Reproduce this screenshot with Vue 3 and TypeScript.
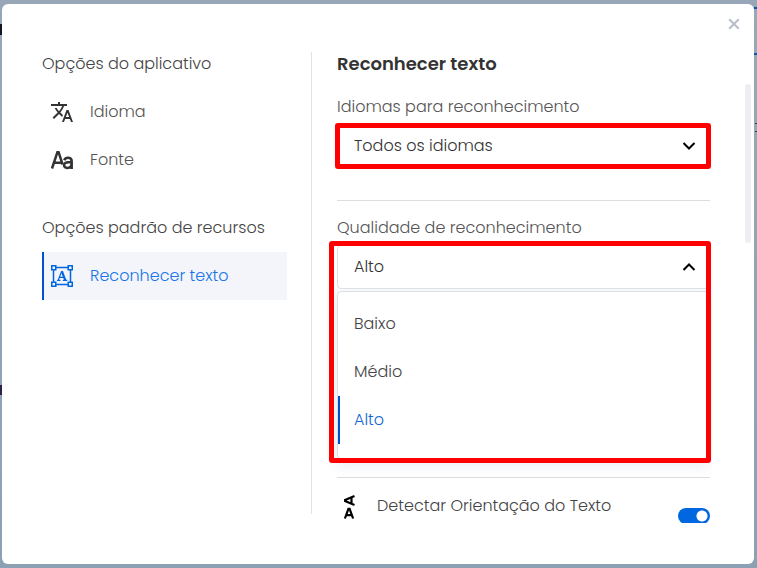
<script setup lang="ts">
import { ref } from 'vue'

const language = ref('Todos os idiomas')
const languages: string[] = ['Todos os idiomas', 'Português', 'Inglês', 'Espanhol']
const qualities: string[] = ['Baixo', 'Médio', 'Alto']
const quality = ref('Alto')
const menuOpen = ref(true)
const detectOrientation = ref(true)

function choose(value: string): void {
  quality.value = value
  menuOpen.value = false
}
</script>

<template>
  <div class="page">
    <section class="dialog" role="dialog" aria-labelledby="dialog-title">
      <button class="close" type="button" aria-label="Fechar">
        <svg width="12" height="12" viewBox="0 0 12 12"><path d="M1.2 1.2l9.6 9.6M10.8 1.2l-9.6 9.6" /></svg>
      </button>

      <nav class="sidebar">
        <h3 class="group">Opções do aplicativo</h3>
        <a class="item" href="#idioma">
          <svg width="24" height="24" viewBox="0 0 24 24" fill="currentColor">
            <path d="M12.87 15.07l-2.54-2.51.03-.03A17.52 17.52 0 0 0 14.07 6H17V4h-7V2H8v2H1v2h11.17C11.5 7.92 10.44 9.75 9 11.35 8.07 10.32 7.3 9.19 6.69 8h-2c.73 1.63 1.73 3.17 2.98 4.56l-5.09 5.02L4 19l5-5 3.11 3.11.76-2.04zM18.5 10h-2L12 22h2l1.12-3h4.75L21 22h2l-4.5-12zm-2.62 7l1.62-4.33L19.12 17h-3.24z" />
          </svg>
          <span>Idioma</span>
        </a>
        <a class="item" href="#fonte">
          <svg width="24" height="24" viewBox="0 0 24 24" fill="none" stroke="currentColor" stroke-width="2.5">
            <path d="M2 20.5L7.4 4.2h1.2L12.6 16.5M4 14.8h8" />
            <path d="M14.2 12.2c.8-1.9 2-2.5 3.7-2.5 2.5 0 3.8 1.2 3.8 3.5v7.8M21.5 14.3h-3.2c-2.7 0-4.2.9-4.2 2.8 0 1.7 1.2 2.8 3.1 2.8 2.6 0 4.3-1.7 4.3-4.1" />
          </svg>
          <span>Fonte</span>
        </a>
        <h3 class="group second">Opções padrão de recursos</h3>
        <a class="item active" href="#reconhecer" aria-current="page">
          <svg width="24" height="24" viewBox="0 0 24 24" fill="none" stroke="currentColor" stroke-width="1.5">
            <path d="M6 3.5h12M6 20.5h12M3.5 6v12M20.5 6v12" />
            <path d="M1.75 1.75h4v4h-4zM18.25 1.75h4v4h-4zM1.75 18.25h4v4h-4zM18.25 18.25h4v4h-4z" />
            <path d="M8.3 16L11.6 7.5M9.4 13.3h4.5M7 16.3h3.5M12.8 16.3h4.5" stroke-width="1.2" />
            <path d="M11.8 7.2L15.3 16.3" stroke-width="2.2" />
          </svg>
          <span>Reconhecer texto</span>
        </a>
      </nav>

      <main class="content">
        <h2 id="dialog-title">Reconhecer texto</h2>
        <div class="scroller">
          <div class="field">
            <label for="language">Idiomas para reconhecimento</label>
            <div class="control">
              <select id="language" v-model="language" class="box">
                <option v-for="name in languages" :key="name">{{ name }}</option>
              </select>
              <svg class="chevron" width="14" height="10" viewBox="0 0 14 10"><path d="M1.5 2l5.5 5.5L12.5 2" /></svg>
              <div class="highlight"></div>
            </div>
          </div>
          <hr />
          <div class="field">
            <label id="quality-label" for="quality">Qualidade de reconhecimento</label>
            <div class="control">
              <button id="quality" type="button" class="box" aria-haspopup="listbox" :aria-expanded="menuOpen" @click="menuOpen = !menuOpen">
                {{ quality }}
              </button>
              <svg class="chevron" width="14" height="10" viewBox="0 0 14 10"><path d="M1.5 8L7 2.5 12.5 8" /></svg>
            </div>
            <ul v-show="menuOpen" class="menu" role="listbox" aria-labelledby="quality-label">
              <li v-for="name in qualities" :key="name" role="option" :aria-selected="name === quality">
                <button type="button" class="option" :class="{ selected: name === quality }" @click="choose(name)">{{ name }}</button>
              </li>
            </ul>
            <div class="highlight open"></div>
          </div>
          <hr class="after-menu" />
          <div class="setting">
            <svg class="orientation" width="24" height="28" viewBox="0 0 24 28" fill="none" stroke="currentColor" stroke-width="2.2">
              <path d="M7.9 24.5L11.4 14.8h1.2l3.5 9.7M9 21.2h6" />
              <path d="M17.5 2L8.1 5.9v1.2l9.4 3.9M14.5 3.2v6.6" />
            </svg>
            <div class="setting-text">
              <label for="orientation">Detectar Orientação do Texto</label>
              <p>reconhecimento de texto girado</p>
            </div>
            <input id="orientation" v-model="detectOrientation" class="switch" type="checkbox" role="switch" />
          </div>
        </div>
      </main>
      <div class="scrollbar"></div>
    </section>
  </div>
</template>

<style>
body {
  margin: 0;
}
</style>

<style scoped>
* {
  box-sizing: border-box;
}
.page {
  height: 100vh;
  padding: 4px 3px 4px 2px;
  background:
    linear-gradient(#10151f, #10151f) 0 24px / 2px 11px no-repeat,
    linear-gradient(#29234c, #29234c) 0 385px / 2px 10px no-repeat,
    linear-gradient(#0756b8, #0756b8) 100% 7px / 3px 2px no-repeat,
    linear-gradient(#0756b8, #0756b8) 100% 53px / 3px 2px no-repeat,
    linear-gradient(#35445b, #35445b) 100% 123px / 2px 1px no-repeat,
    linear-gradient(#35445b, #35445b) 100% 131px / 2px 1px no-repeat,
    linear-gradient(#98a7b8, #8da1b5);
  font-family: Poppins, "Open Sans", sans-serif;
  font-size: 16px;
  font-weight: 300;
  line-height: 24px;
  color: #444;
}
.dialog {
  position: relative;
  display: flex;
  height: 100%;
  padding: 48px 42px 41px 40px;
  border-radius: 6px;
  background: #fff;
}
.close {
  position: absolute;
  top: 14px;
  right: 14px;
  display: flex;
  padding: 0;
  border: 0;
  background: none;
}
.close svg {
  fill: none;
  stroke: #b7bdcb;
  stroke-width: 2;
}
.sidebar {
  flex: 0 0 270px;
  margin-bottom: 9px;
  padding-right: 24px;
  border-right: 1px solid #e2e3e6;
}
.group {
  margin: 0 0 12px;
  font-size: 16px;
  font-weight: 300;
  white-space: nowrap;
}
.group.second {
  margin-top: 32px;
}
.item {
  display: flex;
  align-items: center;
  gap: 16px;
  height: 48px;
  padding-left: 8px;
  color: #333;
  text-decoration: none;
  white-space: nowrap;
}
.item span {
  color: #555;
}
.item.active {
  padding-left: 6px;
  border-left: 2px solid #0052cc;
  background: #f4f5fa;
  color: #0067e0;
}
.item.active span {
  color: #1a76e8;
}
.content {
  flex: 1;
  min-width: 0;
  margin-left: 17px;
  overflow: hidden;
}
h2 {
  margin: 0 0 8px 8px;
  font-size: 18px;
  font-weight: 600;
  line-height: 24px;
  color: #333;
}
.scroller {
  padding: 11px 2px 0 8px;
}
.field {
  position: relative;
}
.field label {
  display: block;
  margin-bottom: 5px;
  color: #555;
}
.control {
  position: relative;
}
.box {
  display: block;
  width: 100%;
  height: 44px;
  padding: 0 16px;
  border: 1px solid #dcdfe6;
  border-radius: 4px;
  background: #fff;
  appearance: none;
  font: inherit;
  color: #333;
  text-align: left;
}
.chevron {
  position: absolute;
  top: 17px;
  right: 14px;
  fill: none;
  stroke: #000;
  stroke-width: 2;
  pointer-events: none;
}
.highlight {
  position: absolute;
  inset: -1px -1px -1px -2px;
  border: 5px solid #f00;
  border-radius: 3px;
  pointer-events: none;
}
.highlight.open {
  inset: 25px -1px -4px -8px;
}
hr {
  height: 1px;
  margin: 32px 0 15px;
  border: 0;
  background: #dcdde1;
}
.menu {
  margin: 2px 0 0;
  padding: 8px 0 14px;
  border: 1px solid #dcdfe6;
  border-radius: 4px;
  background: #fff;
  box-shadow: 0 4px 16px rgba(70, 100, 130, 0.16);
  list-style: none;
}
.option {
  display: block;
  width: 100%;
  height: 48px;
  padding: 0 16px;
  border: 0;
  background: none;
  font: inherit;
  color: #444;
  text-align: left;
}
.option.selected {
  padding-left: 14px;
  border-left: 2px solid #0052cc;
  color: #1766d1;
}
hr.after-menu {
  margin: 18px 0 16px;
}
.setting {
  display: flex;
  align-items: flex-start;
}
.orientation {
  flex: none;
  color: #000;
}
.setting-text {
  flex: 1;
  margin-left: 16px;
}
.setting-text p {
  margin: 1px 0 0;
  font-size: 14px;
  line-height: 20px;
  color: #777;
}
.switch {
  flex: none;
  width: 32px;
  height: 16px;
  margin: 14px 0 0;
  border-radius: 8px;
  background: radial-gradient(circle at 24px 8px, #fff 5px, #0067e0 6px);
  appearance: none;
}
.scrollbar {
  position: absolute;
  top: 80px;
  right: 3px;
  width: 6px;
  height: 159px;
  border-radius: 3px;
  background: #ededf3;
}
</style>
